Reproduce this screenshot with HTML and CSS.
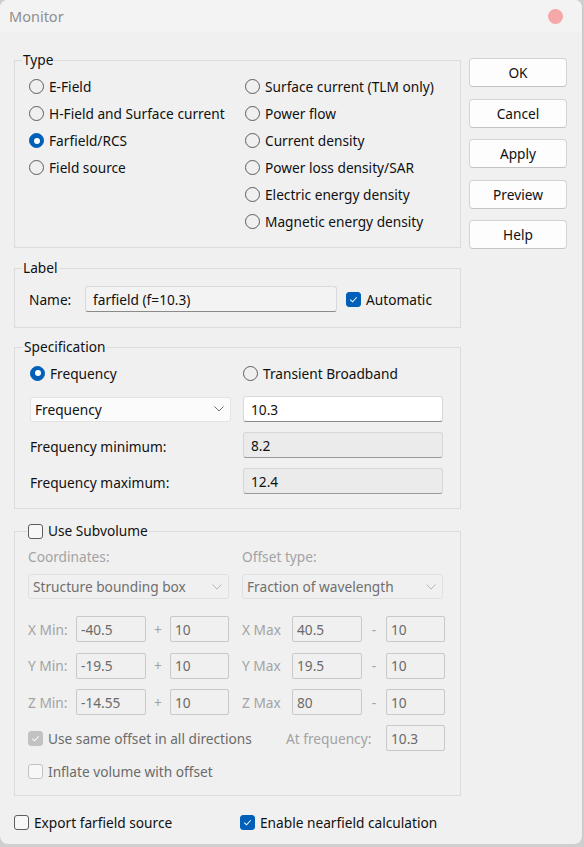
FILE: index.html
```html
<!DOCTYPE html>
<html>
<head>
<meta charset="utf-8">
<link rel="stylesheet" href="styles.css">
</head>
<body>
<div class="window">
  <div class="titlebar">
    <span class="title">Monitor</span>
    <span class="close"></span>
  </div>
  <div class="content">
    <div class="left">
      <fieldset class="group type">
        <legend>Type</legend>
        <div class="type-grid">
          <div class="col">
            <label class="opt"><span class="radio"></span>E-Field</label>
            <label class="opt"><span class="radio"></span>H-Field and Surface current</label>
            <label class="opt"><span class="radio on"></span>Farfield/RCS</label>
            <label class="opt"><span class="radio"></span>Field source</label>
          </div>
          <div class="col">
            <label class="opt"><span class="radio"></span>Surface current (TLM only)</label>
            <label class="opt"><span class="radio"></span>Power flow</label>
            <label class="opt"><span class="radio"></span>Current density</label>
            <label class="opt"><span class="radio"></span>Power loss density/SAR</label>
            <label class="opt"><span class="radio"></span>Electric energy density</label>
            <label class="opt"><span class="radio"></span>Magnetic energy density</label>
          </div>
        </div>
      </fieldset>

      <fieldset class="group label-group">
        <legend>Label</legend>
        <div class="name-row">
          <span class="name-lbl">Name:</span>
          <div class="field name-field">farfield (f=10.3)</div>
          <label class="opt auto"><span class="check on"><svg viewBox="0 0 14 14"><polyline points="3.5,7.2 6,9.5 10.5,4.6"/></svg></span>Automatic</label>
        </div>
      </fieldset>

      <fieldset class="group spec">
        <legend>Specification</legend>
        <div class="spec-row radios">
          <label class="opt"><span class="radio on"></span>Frequency</label>
          <label class="opt"><span class="radio"></span>Transient Broadband</label>
        </div>
        <div class="spec-row first">
          <div class="select">Frequency<svg class="chev" viewBox="0 0 10 6"><polyline points="0.5,0.5 5,5 9.5,0.5"/></svg></div>
          <div class="field white">10.3</div>
        </div>
        <div class="spec-row">
          <span class="spec-lbl">Frequency minimum:</span>
          <div class="field ro">8.2</div>
        </div>
        <div class="spec-row">
          <span class="spec-lbl">Frequency maximum:</span>
          <div class="field ro">12.4</div>
        </div>
      </fieldset>

      <fieldset class="group sub">
        <legend><label class="opt"><span class="check"></span>Use Subvolume</label></legend>
        <div class="sub-top">
          <span class="dis">Coordinates:</span>
          <span class="dis">Offset type:</span>
        </div>
        <div class="sub-selects">
          <div class="select dsel">Structure bounding box<svg class="chev" viewBox="0 0 10 6"><polyline points="0.5,0.5 5,5 9.5,0.5"/></svg></div>
          <div class="select dsel">Fraction of wavelength<svg class="chev" viewBox="0 0 10 6"><polyline points="0.5,0.5 5,5 9.5,0.5"/></svg></div>
        </div>
        <div class="coords">
          <span class="dis">X Min:</span><div class="dfield">-40.5</div><span class="dis op">+</span><div class="dfield">10</div>
          <span class="dis">X Max</span><div class="dfield">40.5</div><span class="dis op">-</span><div class="dfield">10</div>

          <span class="dis">Y Min:</span><div class="dfield">-19.5</div><span class="dis op">+</span><div class="dfield">10</div>
          <span class="dis">Y Max</span><div class="dfield">19.5</div><span class="dis op">-</span><div class="dfield">10</div>

          <span class="dis">Z Min:</span><div class="dfield">-14.55</div><span class="dis op">+</span><div class="dfield">10</div>
          <span class="dis">Z Max</span><div class="dfield">80</div><span class="dis op">-</span><div class="dfield">10</div>
        </div>
        <div class="same-row">
          <label class="opt dtext"><span class="check dison"><svg viewBox="0 0 14 14"><polyline points="3.5,7.2 6,9.5 10.5,4.6"/></svg></span>Use same offset in all directions</label>
          <span class="dis atf">At frequency:</span>
          <div class="dfield freq">10.3</div>
        </div>
        <label class="opt dtext inflate"><span class="check disoff"></span>Inflate volume with offset</label>
      </fieldset>

      <div class="bottom">
        <label class="opt export"><span class="check"></span>Export farfield source</label>
        <label class="opt"><span class="check on"><svg viewBox="0 0 14 14"><polyline points="3.5,7.2 6,9.5 10.5,4.6"/></svg></span>Enable nearfield calculation</label>
      </div>
    </div>

    <div class="buttons">
      <button class="btn">OK</button>
      <button class="btn">Cancel</button>
      <button class="btn">Apply</button>
      <button class="btn">Preview</button>
      <button class="btn">Help</button>
    </div>
  </div>
</div>
</body>
</html>
```

FILE: styles.css
```css
* { box-sizing: border-box; }
html, body {
  margin: 0;
  padding: 0;
  background: #cfcfcf;
}
body {
  font-family: "Noto Sans", "Open Sans", sans-serif;
  font-size: 13.7px;
  color: #111;
  width: 584px;
  height: 847px;
  overflow: hidden;
}
.window {
  width: 583px;
  height: 844px;
  background: #f0f0f0;
  border-right: 1px solid #c9c9c9;
  border-radius: 8px;
  overflow: hidden;
}
.titlebar {
  height: 32px;
  background: #f3f3f3;
  display: flex;
  align-items: center;
  justify-content: space-between;
  padding: 0 19px 0 9px;
}
.title {
  color: #8f8f8f;
  font-size: 14.5px;
}
.close {
  width: 15px;
  height: 15px;
  border-radius: 50%;
  background: #f4a8a8;
}
.content {
  display: flex;
  padding-left: 14px;
}
.left {
  width: 447px;
  padding-top: 19px;
}
.buttons {
  margin-left: 8px;
  padding-top: 26px;
  display: flex;
  flex-direction: column;
  gap: 11.5px;
}
.btn {
  width: 98px;
  height: 29px;
  background: #fdfdfd;
  border: 1px solid #d3d3d3;
  border-bottom-color: #c4c4c4;
  border-radius: 4px;
  font-family: inherit;
  font-size: 13.7px;
  color: #111;
  padding: 0;
}
.group {
  margin: 0;
  border: 1px solid #dcdcdc;
  padding: 0 0 0 14px;
  min-width: 0;
}
.group legend {
  padding: 0 1px;
  margin-left: -7px;
  line-height: 18px;
  height: 18px;
}
.opt {
  display: flex;
  align-items: center;
  gap: 5px;
  white-space: nowrap;
}
.radio {
  width: 15px;
  height: 15px;
  border: 1px solid #5d5d5d;
  border-radius: 50%;
  flex: none;
  display: flex;
  align-items: center;
  justify-content: center;
}
.radio.on {
  background: #005fb8;
  border-color: #005fb8;
}
.radio.on::after {
  content: "";
  width: 6px;
  height: 6px;
  border-radius: 50%;
  background: #fff;
}
.check {
  width: 15px;
  height: 15px;
  border: 1px solid #5d5d5d;
  border-radius: 3px;
  flex: none;
  background: #f7f7f7;
  display: flex;
}
.check svg {
  width: 100%;
  height: 100%;
  fill: none;
  stroke: #fff;
  stroke-width: 1.1;
}
.check.on {
  background: #005fb8;
  border-color: #005fb8;
}
.check.dison {
  background: #c2c2c2;
  border-color: #c2c2c2;
}
.check.disoff {
  border-color: #c2c2c2;
}

/* Type */
.type {
  padding-top: 4px;
  padding-bottom: 12px;
}
.type-grid {
  display: grid;
  grid-template-columns: 216px 1fr;
}
.type .opt {
  height: 27px;
}

/* Label */
.label-group {
  margin-top: 11px;
  padding-top: 9px;
  padding-bottom: 15px;
}
.name-row {
  display: flex;
  align-items: center;
  height: 26px;
}
.name-lbl {
  width: 56px;
}
.field {
  height: 26px;
  border: 1px solid #d9d9d9;
  border-bottom-color: #8a8a8a;
  border-radius: 3px;
  padding: 0 7px;
  display: flex;
  align-items: center;
}
.name-field {
  width: 252px;
  background: #f3f3f3;
}
.auto {
  margin-left: 9px;
}

/* Spec */
.spec {
  margin-top: 10px;
  padding-top: 4px;
  padding-bottom: 14px;
  padding-left: 15px;
}
.spec-row {
  display: grid;
  grid-template-columns: 213px 200px;
  align-items: center;
  height: 26px;
  margin-top: 9px;
}
.spec-row.radios {
  margin-top: 0;
}
.spec-row.first {
  margin-top: 10px;
}
.spec-row + .spec-row:not(.first) {
  margin-top: 10px;
}
.spec-lbl {
  padding-top: 3px;
}
.select {
  width: 201px;
  height: 25px;
  background: #fbfbfb;
  border: 1px solid #e3e3e3;
  border-radius: 3px;
  display: flex;
  align-items: center;
  justify-content: space-between;
  padding: 0 6px 0 4px;
}
.chev {
  width: 10px;
  height: 6px;
  fill: none;
  stroke: #707070;
  stroke-width: 1;
}
.white {
  background: #fff;
}
.ro {
  background: #ebebeb;
  border-color: #d7d7d7;
  border-bottom-color: #9a9a9a;
}

/* Subvolume */
.sub {
  margin-top: 13px;
  padding-top: 8px;
  padding-bottom: 15px;
  padding-left: 13px;
}
.sub legend {
  margin-left: -1px;
}
.sub legend .opt {
  gap: 5px;
}
.dis {
  color: #a3a3a3;
}
.sub-top {
  display: grid;
  grid-template-columns: 214px 1fr;
  height: 18px;
  line-height: 18px;
}
.sub-selects {
  display: grid;
  grid-template-columns: 214px 201px;
  margin-top: 8px;
}
.dsel {
  background: #f0f0f0;
  border-color: #e0e0e0;
  color: #6f6f6f;
}
.dsel .chev {
  stroke: #b5b5b5;
}
.coords {
  display: grid;
  grid-template-columns: 48px 70px 24px 59px 13px 50px 70px 24px 59px;
  grid-auto-rows: 26px;
  row-gap: 10.5px;
  align-items: center;
  margin-top: 17px;
}
.coords > :nth-child(8n+5) {
  grid-column: 6;
}
.op {
  text-align: center;
}
.dfield {
  height: 26px;
  border: 1px solid #c9c9c9;
  border-radius: 2px;
  color: #6a6a6a;
  padding: 0 4px;
  display: flex;
  align-items: center;
}
.dtext {
  color: #6b6b6b;
}
.same-row {
  display: grid;
  grid-template-columns: 258px 100px 59px;
  align-items: center;
  height: 26px;
  margin-top: 10px;
}
.inflate {
  margin-top: 11px;
  height: 18px;
}

/* Bottom */
.bottom {
  display: flex;
  align-items: center;
  height: 18px;
  margin-top: 17px;
}
.export {
  width: 226px;
}
```
